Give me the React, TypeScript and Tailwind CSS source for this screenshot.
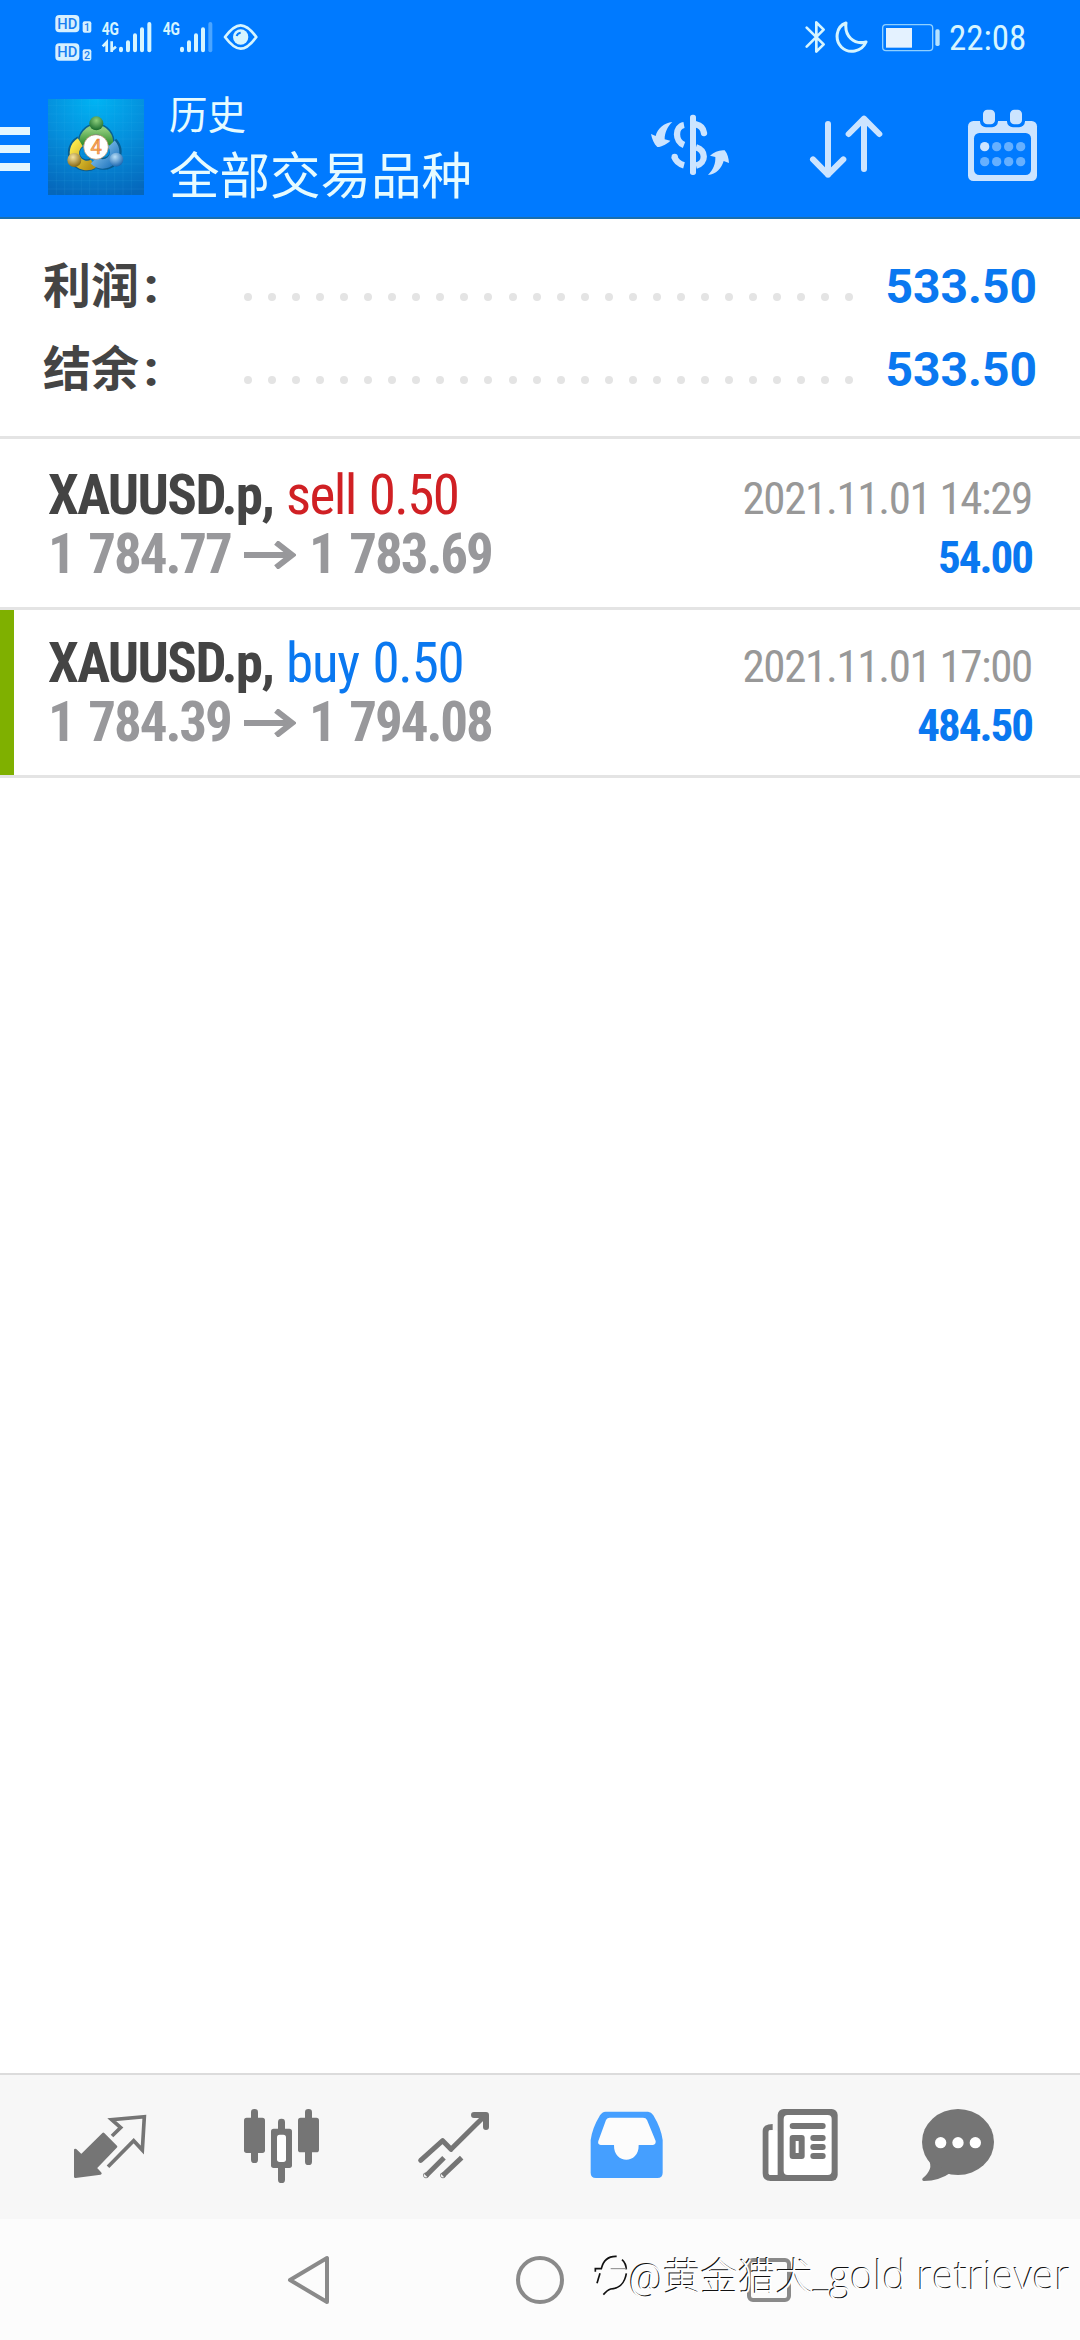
type SummaryProps = {
  label: string;
  value: string;
};

type DealProps = {
  symbol: string;
  side: "sell" | "buy";
  volume: string;
  open: string;
  close: string;
  time: string;
  profit: string;
  marked?: boolean;
};

const summary: SummaryProps[] = [
  { label: "利润", value: "533.50" },
  { label: "结余", value: "533.50" },
];

const deals: DealProps[] = [
  {
    symbol: "XAUUSD.p,",
    side: "sell",
    volume: "0.50",
    open: "1 784.77",
    close: "1 783.69",
    time: "2021.11.01 14:29",
    profit: "54.00",
  },
  {
    symbol: "XAUUSD.p,",
    side: "buy",
    volume: "0.50",
    open: "1 784.39",
    close: "1 794.08",
    time: "2021.11.01 17:00",
    profit: "484.50",
    marked: true,
  },
];

function HdIcon() {
  return (
    <svg className="w-[41px] h-[75px]" viewBox="159 0 123 225" fill="#d6f0ff">
      <rect x="166" y="45" width="72" height="52" rx="12" />
      <rect x="248" y="64" width="26" height="34" rx="6" />
      <rect x="166" y="130" width="72" height="52" rx="12" />
      <rect x="248" y="148" width="26" height="34" rx="6" />
      <g
        fill="#1a7ff0"
        fontFamily="Roboto, sans-serif"
        fontWeight="500"
        textAnchor="middle"
      >
        <text x="202" y="87" fontSize="44">HD</text>
        <text x="202" y="172" fontSize="44">HD</text>
        <text x="261" y="92" fontSize="32">1</text>
        <text x="261" y="176" fontSize="32">2</text>
      </g>
    </svg>
  );
}

function SignalIcon({ weak, transfer }: { weak?: boolean; transfer?: boolean }) {
  return (
    <svg className="w-[53px] h-[75px]" viewBox="300 0 159 225">
      <text
        x="305"
        y="105"
        fontSize="54"
        fontFamily="Roboto, sans-serif"
        fontWeight="700"
        fill="#d6f5ff"
        textLength="52"
        lengthAdjust="spacingAndGlyphs"
      >
        4G
      </text>
      {transfer && (
        <path
          d="M308 139 L320 127 V156 M335 124 V156 M333 152 L348 140"
          stroke="#d6f5ff"
          strokeWidth="8"
          fill="none"
        />
      )}
      <g stroke="#d6f5ff" strokeWidth="12" strokeLinecap="round">
        <path d="M363 146 V151 M384 127 V151 M405 106 V151 M426 88 V151" />
        <path d="M448 72 V151" opacity={weak ? 0.35 : 1} />
      </g>
    </svg>
  );
}

function EyeIcon() {
  return (
    <svg className="w-[37px] h-[75px]" viewBox="666 0 111 225">
      <path
        d="M675 111 C695 84 708 76 722 76 C736 76 749 84 769 111 C749 138 736 146 722 146 C708 146 695 138 675 111Z"
        fill="none"
        stroke="#d6f5ff"
        strokeWidth="8"
        strokeLinejoin="round"
      />
      <circle cx="722" cy="111" r="23" fill="#d6f5ff" />
      <path d="M710 108 A14 14 0 0 1 722 98" stroke="#007aff" strokeWidth="6" fill="none" />
    </svg>
  );
}

function BluetoothIcon() {
  return (
    <svg className="w-[23px] h-[75px]" viewBox="69 0 69 225">
      <path
        d="M77 83 L128 133 L106 155 V67 L128 89 L77 140"
        fill="none"
        stroke="#d6f5ff"
        strokeWidth="8"
        strokeLinejoin="round"
        strokeLinecap="round"
      />
    </svg>
  );
}

function MoonIcon() {
  return (
    <svg className="w-[34px] h-[75px]" viewBox="162 0 102 225">
      <path
        d="M195 69 C164 80 161 120 181 141 C203 163 242 156 255 126 C218 135 190 108 195 69Z"
        fill="none"
        stroke="#d6f5ff"
        strokeWidth="9"
        strokeLinejoin="round"
      />
    </svg>
  );
}

function BatteryIcon() {
  return (
    <svg className="w-[60px] h-[75px]" viewBox="300 0 180 225">
      <rect x="305" y="74" width="150" height="78" rx="10" fill="none" stroke="#8fd0ff" strokeWidth="4" />
      <rect x="315" y="84" width="78" height="59" fill="#e4f2ff" />
      <rect x="463" y="88" width="13" height="50" rx="5" fill="#b5e2ff" />
    </svg>
  );
}

function StatusBar() {
  return (
    <div className="h-[75px] flex items-center justify-between pl-[53px] pr-[55px]">
      <div className="flex">
        <HdIcon />
        <div className="flex gap-2 ml-[6px]">
          <SignalIcon transfer />
          <SignalIcon weak />
          <EyeIcon />
        </div>
      </div>
      <div className="flex items-center">
        <BluetoothIcon />
        <div className="flex gap-3 ml-2">
          <MoonIcon />
          <BatteryIcon />
        </div>
        <span className="ml-[8px] w-[76px] text-[35px] leading-[75px] pt-px font-stretch-75% text-[#d6f5ff]">
          22:08
        </span>
      </div>
    </div>
  );
}

function AppLogo() {
  return (
    <svg className="size-24" viewBox="0 0 288 288">
      <defs>
        <radialGradient id="bg" cx="0.5" cy="0" r="1.05">
          <stop offset="0" stopColor="#00b4f4" />
          <stop offset="0.5" stopColor="#058fdc" />
          <stop offset="1" stopColor="#0567bb" />
        </radialGradient>
        <linearGradient id="green" x1="0" y1="0" x2="0" y2="1">
          <stop offset="0" stopColor="#8ecb7a" />
          <stop offset="1" stopColor="#2b8a2b" />
        </linearGradient>
        <linearGradient id="yellow" x1="0" y1="0" x2="1" y2="1">
          <stop offset="0" stopColor="#fbe84a" />
          <stop offset="1" stopColor="#b58f14" />
        </linearGradient>
        <linearGradient id="blue" x1="0" y1="0" x2="1" y2="1">
          <stop offset="0" stopColor="#9bd4f5" />
          <stop offset="1" stopColor="#2277c0" />
        </linearGradient>
        <radialGradient id="greenBall" cx="0.5" cy="0.3" r="0.7">
          <stop offset="0" stopColor="#8dcf7c" />
          <stop offset="1" stopColor="#176a2c" />
        </radialGradient>
        <radialGradient id="yellowBall" cx="0.4" cy="0.3" r="0.7">
          <stop offset="0" stopColor="#f4e2a0" />
          <stop offset="1" stopColor="#8a6a14" />
        </radialGradient>
        <radialGradient id="blueBall" cx="0.4" cy="0.3" r="0.7">
          <stop offset="0" stopColor="#b9e0f8" />
          <stop offset="1" stopColor="#1c67b0" />
        </radialGradient>
      </defs>
      <rect width="288" height="288" fill="url(#bg)" />
      <path
        d="M25 0V288M50 0V288M75 0V288M100 0V288M125 0V288M150 0V288M175 0V288M200 0V288M225 0V288M250 0V288M0 20H288M0 45H288M0 70H288M0 95H288M0 120H288M0 145H288M0 170H288M0 195H288M0 220H288M0 245H288M0 270H288"
        stroke="#4fc3f7"
        strokeOpacity="0.15"
        strokeWidth="2"
      />
      <g fill="none" stroke="#0b4f78" strokeWidth="36" opacity="0.75">
        <path d="M108 136 A37 39 0 1 1 181 136" />
        <path d="M97 128 A36 36 0 1 0 134 194" />
        <path d="M192 132 A36 36 0 1 1 142 184" />
      </g>
      <path d="M108 138 A37 40 0 1 1 181 138" fill="none" stroke="url(#green)" strokeWidth="28" />
      <path d="M97 130 A36 36 0 1 0 136 194" fill="none" stroke="url(#yellow)" strokeWidth="28" />
      <path d="M190 134 A36 36 0 1 1 138 184" fill="none" stroke="url(#blue)" strokeWidth="28" />
      <circle cx="145" cy="73" r="21" fill="url(#greenBall)" />
      <circle cx="79" cy="183" r="21" fill="url(#yellowBall)" />
      <circle cx="205" cy="182" r="21" fill="url(#blueBall)" />
      <circle cx="144" cy="144" r="37" fill="#fff" stroke="#b58a60" strokeWidth="2" />
      <text
        x="144"
        y="164"
        fontSize="60"
        fontFamily="Roboto, sans-serif"
        textAnchor="middle"
        fill="#f9b25a"
        stroke="#e8863c"
        strokeWidth="2"
      >
        4
      </text>
    </svg>
  );
}

function CurrencyIcon() {
  return (
    <svg className="w-[84px] h-[66px]" viewBox="84 66 252 198" fill="#cce4ff">
      <rect x="210" y="74" width="18" height="181" rx="8" />
      <g fill="none" stroke="#cce4ff" strokeWidth="19">
        <path d="M192 105 C164 110 164 154 192 165" />
        <path d="M228 103 C242 106 250 115 252 129" strokeLinecap="round" />
        <path d="M228 172 C258 182 260 218 228 227" />
        <path d="M163 200 C167 213 177 222 192 226" />
      </g>
      <circle cx="164" cy="201" r="9.500" />
      <path d="M157 96 C133 99 112 115 107 138 L93 132 C96 148 102 162 112 171 C126 171 142 161 151 152 L134 148 C134 128 142 110 157 96Z" />
      <path d="M264 255 C281 238 287 220 286 201 L270 197 C282 187 298 179 314 181 C323 192 326 205 327 219 L311 213 C304 236 289 253 264 255Z" />
    </svg>
  );
}

function SortIcon() {
  return (
    <svg className="w-[80px] h-[69px]" viewBox="78 336 240 207">
      <path
        d="M144 372 V524 M99 478 L144 524 L190 478 M252 507 V356 M206 402 L252 356 L298 402"
        fill="none"
        stroke="#cce4ff"
        strokeWidth="18"
        strokeLinecap="round"
        strokeLinejoin="round"
      />
    </svg>
  );
}

function CalendarIcon() {
  return (
    <svg className="w-[75px] h-[77px]" viewBox="555 321 225 231">
      <rect x="564" y="363" width="207" height="180" rx="16" fill="#cce4ff" />
      <rect x="582" y="399" width="171" height="126" rx="16" fill="#007aff" />
      <rect x="600" y="321" width="54" height="61" rx="18" fill="#007aff" />
      <rect x="681" y="321" width="54" height="61" rx="18" fill="#007aff" />
      <rect x="609" y="329" width="36" height="44" rx="13" fill="#cce4ff" />
      <rect x="690" y="329" width="36" height="44" rx="13" fill="#cce4ff" />
      <circle cx="614" cy="440" r="14" fill="#cce4ff" />
      <g fill="#66b0ff">
        <circle cx="650" cy="440" r="14" />
        <circle cx="686" cy="440" r="14" />
        <circle cx="722" cy="440" r="14" />
        <circle cx="614" cy="485" r="14" />
        <circle cx="650" cy="485" r="14" />
        <circle cx="686" cy="485" r="14" />
        <circle cx="722" cy="485" r="14" />
      </g>
    </svg>
  );
}

function Header() {
  return (
    <header className="h-[219px] bg-[#007aff] border-b-2 border-[#1a6fae]">
      <StatusBar />
      <div className="h-[142px] flex items-start pr-[40px]">
        <div className="flex flex-col gap-[10px] mt-[52px]">
          <span className="w-[30px] h-2 bg-[#e2f6ff]" />
          <span className="w-[30px] h-2 bg-[#e2f6ff]" />
          <span className="w-[30px] h-2 bg-[#e2f6ff]" />
        </div>
        <div className="ml-[18px] mt-6">
          <AppLogo />
        </div>
        <div className="flex flex-col ml-[25px] mt-[13px] text-[#e6fbff]">
          <span className="text-[38.5px] leading-[56px]">历史</span>
          <span className="text-[50.5px] leading-[66px]">全部交易品种</span>
        </div>
        <div className="flex ml-auto mt-[37px]">
          <CurrencyIcon />
          <div className="ml-[74px]">
            <SortIcon />
          </div>
          <div className="ml-[79px] -mt-[5px]">
            <CalendarIcon />
          </div>
        </div>
      </div>
    </header>
  );
}

function SummaryRow({ label, value }: SummaryProps) {
  return (
    <div className="h-[83px] flex items-center justify-between font-bold text-5xl">
      <span className="w-[201px] text-[#444]">
        {label}
        <span className="ml-[5px] font-black">:</span>
      </span>
      <div className="flex-1 flex justify-between pr-[32px] pt-[21px]">
        {Array.from({ length: 26 }, (_, i) => (
          <span key={i} className="size-2 rounded-full bg-[#e4e4e4]" />
        ))}
      </div>
      <span className="text-[#0a78f0]">{value}</span>
    </div>
  );
}

function Arrow() {
  return (
    <svg className="w-[52px] h-[28px]" viewBox="0 0 52 28" fill="none" stroke="#98989b">
      <path d="M0 14 H49" strokeWidth="6" />
      <path d="M32 1.500 L48 14 L32 26.500" strokeWidth="6" />
    </svg>
  );
}

function DealRow(deal: DealProps) {
  return (
    <div className="h-[168px] flex border-b-[3px] border-[#e4e4e4] font-stretch-75%">
      <div className={deal.marked ? "w-[14px] bg-[#7fb000]" : "w-[14px]"} />
      <div className="flex-1 flex justify-between pl-[34px] pr-12 pt-[24px]">
        <div className="text-[55px] leading-[59px] tracking-[-0.03em]">
          <div className="flex">
            <span className="w-[238px] font-bold text-[#444]">{deal.symbol}</span>
            <span
              className={
                deal.side === "sell"
                  ? "text-[#d02024] tracking-[-0.029em] [word-spacing:2px]"
                  : "text-[#0a78f0] tracking-[-0.022em] [word-spacing:2px]"
              }
            >
              {deal.side} {deal.volume}
            </span>
          </div>
          <div className="flex items-center font-bold text-[#98989b] tracking-[-0.038em] [word-spacing:4px]">
            <span className="w-[196px]">{deal.open}</span>
            <Arrow />
            <span className="ml-[13px]">{deal.close}</span>
          </div>
        </div>
        <div className="text-[45px] leading-[59px] text-right pt-[3px]">
          <div className="text-[#989898] tracking-[-0.03em]">{deal.time}</div>
          <div className="font-bold text-[#0a78f0] tracking-[-0.045em]">{deal.profit}</div>
        </div>
      </div>
    </div>
  );
}

function TabBar() {
  return (
    <nav className="h-[146px] flex pl-[70px] pt-[31px] bg-[#f7f7f7] border-t-2 border-[#dcdcdc]">
      <svg className="size-20" viewBox="90 138 240 240" fill="#757575">
        <path
          d="M190 222 L228 260 L166 324 L181 340 L106 350 V270 L124 287Z"
          stroke="#757575"
          strokeWidth="8"
          strokeLinejoin="round"
        />
        <path
          d="M216 228 L242 203 L215 179 L313 170 L307 270 L281 242 L204 320"
          fill="none"
          stroke="#757575"
          strokeWidth="11"
        />
      </svg>
      <svg className="size-20 ml-[92px]" viewBox="606 138 240 240" fill="#757575">
        <rect x="612" y="173" width="63" height="106" rx="8" />
        <rect x="633" y="147" width="21" height="162" rx="10" />
        <rect x="774" y="173" width="63" height="104" rx="8" />
        <rect x="795" y="147" width="21" height="168" rx="10" />
        <rect x="714" y="176" width="21" height="40" rx="10" />
        <rect x="714" y="315" width="21" height="54" rx="10" />
        <rect x="693" y="206" width="63" height="118" rx="8" />
        <rect x="711" y="224" width="27" height="82" rx="8" fill="#fff" />
      </svg>
      <svg
        className="size-20 ml-[92px]"
        viewBox="1122 138 240 240"
        fill="none"
        stroke="#757575"
        strokeWidth="15"
      >
        <path d="M1142 301 L1208 242 L1233 268 L1336 166" strokeLinejoin="round" strokeLinecap="round" />
        <path d="M1302 165 H1338 V201" strokeWidth="18" strokeLinejoin="round" strokeLinecap="round" />
        <path d="M1212 293 L1158 347 M1265 293 L1208 347" />
        <circle cx="1158" cy="346" r="1" strokeLinecap="round" />
        <circle cx="1209" cy="346" r="1" strokeLinecap="round" />
      </svg>
      <svg className="size-20 ml-[92px]" viewBox="78 138 240 240" fill="#459fff">
        <path d="M137 155 H264 Q274 156 280 166 Q303 204 308 240 V338 Q308 354 292 354 H108 Q92 354 92 338 V240 Q97 204 120 166 Q126 156 137 155Z" />
        <path
          d="M149 173 H249 Q258 173 261 180 L287 243 Q288 254 279 255 H236 C238 314 160 314 162 255 H122 Q112 254 115 243 L138 180 Q142 173 149 173Z"
          fill="#fcfcfc"
        />
      </svg>
      <svg className="size-20 ml-[94px]" viewBox="600 138 240 240" fill="#757575">
        <path d="M638 201 Q617 201 617 213 V340 Q617 354 632 354 H680" fill="none" stroke="#757575" strokeWidth="18" />
        <rect x="626" y="211" width="27" height="134" rx="5" fill="#fff" />
        <rect x="653" y="147" width="180" height="216" rx="18" />
        <rect x="671" y="165" width="144" height="180" rx="12" fill="#fff" />
        <rect x="689" y="189" width="108" height="18" rx="9" />
        <rect x="689" y="225" width="45" height="72" rx="9" />
        <rect x="707" y="243" width="9" height="36" fill="#fff" />
        <rect x="751" y="225" width="46" height="18" rx="9" />
        <rect x="751" y="252" width="46" height="18" rx="9" />
        <rect x="751" y="279" width="46" height="18" rx="9" />
      </svg>
      <svg className="size-20 ml-[78px]" viewBox="1074 138 240 240" fill="#757575">
        <ellipse cx="1194" cy="246" rx="108" ry="99" />
        <path d="M1106 300 Q1122 326 1088 355 Q1084 362 1092 363 Q1138 362 1172 338Z" />
        <g fill="#fff">
          <circle cx="1142" cy="248" r="17" />
          <circle cx="1194" cy="248" r="17" />
          <circle cx="1246" cy="248" r="17" />
        </g>
      </svg>
    </nav>
  );
}

function SystemNav() {
  return (
    <div className="relative h-[121px] bg-[#fcfcfc]">
      <div className="h-[121px] flex items-center pl-[286px]">
        <svg className="w-[45px] h-[52px]" viewBox="0 0 45 52">
          <path d="M41 4 V48 L4 26Z" fill="none" stroke="#8a8a8a" strokeWidth="4" strokeLinejoin="round" />
        </svg>
        <span className="ml-[185px] size-12 rounded-full border-4 border-[#8a8a8a]" />
        <span className="ml-[183px] size-11 rounded-md border-4 border-[#8a8a8a]" />
      </div>
      <div className="absolute left-[594px] top-[28px] flex items-center">
        <svg className="w-[34px] h-[44px]" viewBox="100 120 102 132" fill="none" stroke="#111" strokeWidth="5">
          <path d="M104 173 V164 H122 C128 138 146 126 168 127 M184 137 Q196 148 197 166" />
          <path d="M118 178 L109 208" />
          <path d="M150 164 H197" stroke="#888" strokeWidth="3" />
          <path d="M197 178 C192 210 172 224 150 225 Q140 228 128 242" />
        </svg>
        <span className="ml-px whitespace-nowrap text-[37.5px] leading-[56px] font-light text-white [text-shadow:-1px_-1px_0_#111]">
          @黄金猎犬_
          <span className="font-['Open_Sans',sans-serif] text-[40px]">gold retriever</span>
        </span>
      </div>
    </div>
  );
}

export default function App() {
  return (
    <div className="w-[1080px] h-[2340px] flex flex-col bg-white overflow-hidden font-['Roboto','Noto_Sans_CJK_SC',sans-serif]">
      <Header />
      <section className="h-[220px] pt-[26px] pl-[43px] pr-[43px] border-b-[3px] border-[#e4e4e4]">
        {summary.map((row) => (
          <SummaryRow key={row.label} {...row} />
        ))}
      </section>
      <main className="flex-1 pt-[3px]">
        {deals.map((deal) => (
          <DealRow key={deal.time} {...deal} />
        ))}
      </main>
      <TabBar />
      <SystemNav />
    </div>
  );
}
